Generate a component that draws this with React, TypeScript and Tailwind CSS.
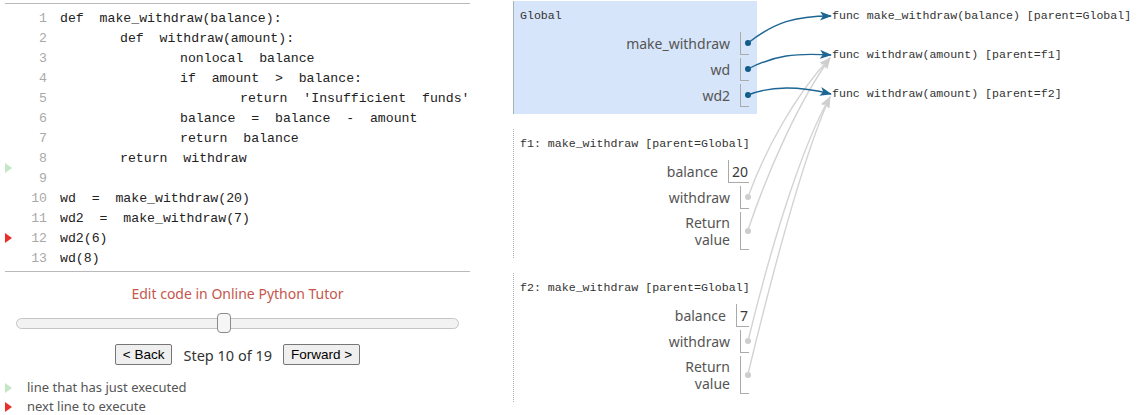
import React from "react";

const mono = "font-['Liberation_Mono','DejaVu_Sans_Mono',monospace]";
const sans = "font-['Noto_Sans','Liberation_Sans',sans-serif]";

const indents = ["pl-0", "pl-[60px]", "pl-[120px]", "pl-[180px]"];

const codeLines: { text: string; level: number }[] = [
  { text: "def  make_withdraw(balance):", level: 0 },
  { text: "def  withdraw(amount):", level: 1 },
  { text: "nonlocal  balance", level: 2 },
  { text: "if  amount  >  balance:", level: 2 },
  { text: "return  'Insufficient  funds'", level: 3 },
  { text: "balance  =  balance  -  amount", level: 2 },
  { text: "return  balance", level: 2 },
  { text: "return  withdraw", level: 1 },
  { text: "", level: 0 },
  { text: "wd  =  make_withdraw(20)", level: 0 },
  { text: "wd2  =  make_withdraw(7)", level: 0 },
  { text: "wd2(6)", level: 0 },
  { text: "wd(8)", level: 0 },
];

function GreenArrow() {
  return <span className="inline-block w-0 h-0 border-y-[5px] border-y-transparent border-l-[7px] border-l-[#c5e6c5]" />;
}

function RedArrow() {
  return <span className="inline-block w-0 h-0 border-y-[5px] border-y-transparent border-l-[7px] border-l-[#e8302a]" />;
}

function CodePanel() {
  return (
    <div className="ml-[5px] mt-[3px] w-[465px] border-y border-[#b9b9b9] pt-[5px] pb-[2px]">
      {codeLines.map((line, i) => (
        <div key={i} className={`relative flex h-[20px] items-center ${mono} text-[13.2px] whitespace-pre`}>
          {i === 7 && (
            <span className="absolute left-0 top-[14px] flex">
              <GreenArrow />
            </span>
          )}
          {i === 11 && (
            <span className="absolute left-0 top-[4px] flex">
              <RedArrow />
            </span>
          )}
          <span className="w-[42px] text-right text-[#aaa]">{i + 1}</span>
          <span className={`ml-[13px] text-[#222] ${indents[line.level]}`}>{line.text}</span>
        </div>
      ))}
    </div>
  );
}

function Controls() {
  return (
    <div className={sans}>
      <div className="mt-[13px] h-[18px] text-center text-[14px] leading-[18px] text-[#c4574d]">
        Edit code in Online Python Tutor
      </div>
      <div className="relative mx-[16px] mt-[10px] h-[20px]">
        <div className="absolute left-0 right-0 top-[5px] h-[11px] rounded-full border border-[#c5c5c5] bg-[#f2f2f2]" />
        <div className="absolute left-[201px] top-0 h-[20px] w-[14px] rounded-[4px] border border-[#8a8a8a] bg-[#f6f6f6]" />
      </div>
      <div className="mt-[11px] flex h-[21px] items-center justify-center gap-[11px]">
        <button className="h-[21px] rounded-[2px] border border-[#767676] bg-[#efefef] px-[7px] font-['Liberation_Sans',sans-serif] text-[13.5px] text-black">
          &lt; Back
        </button>
        <span className="text-[14.5px] leading-[20px] text-[#333]">Step 10 of 19</span>
        <button className="h-[21px] rounded-[2px] border border-[#767676] bg-[#efefef] px-[7px] font-['Liberation_Sans',sans-serif] text-[13.5px] text-black">
          Forward &gt;
        </button>
      </div>
      <div className="mt-[13px] text-[13px] text-[#555]">
        <div className="flex h-[19px] items-center">
          <span className="ml-[5px] flex w-[22px]">
            <GreenArrow />
          </span>
          line that has just executed
        </div>
        <div className="flex h-[19px] items-center">
          <span className="ml-[5px] flex w-[22px]">
            <RedArrow />
          </span>
          next line to execute
        </div>
      </div>
    </div>
  );
}

type Row = { name: string[]; value?: string; pointer?: "blue" | "gray"; tall?: boolean };

function Frame({ title, rows, highlighted }: { title: string; rows: Row[]; highlighted?: boolean }) {
  return (
    <div
      className={
        highlighted
          ? "w-[244px] border-l border-[#a6b3b6] bg-[#d6e5f9] pl-[6px] pr-[8px] pt-[7px] pb-[7px]"
          : "w-[244px] border-l border-dotted border-[#aaa] bg-white pl-[6px] pr-[8px] pt-[7px] pb-[8px]"
      }
    >
      <div className={`h-[16px] leading-[16px] ${mono} text-[11.6px] text-[#333] whitespace-nowrap`}>{title}</div>
      <div className="mt-[8px] flex flex-col items-end gap-[3px]">
        {rows.map((r) => (
          <div key={r.name.join(" ")} className="flex items-center">
            <div className={`pr-[10px] text-right ${sans} text-[14px] leading-[17px] text-[#555]`}>
              {r.name.map((n) => (
                <div key={n}>{n}</div>
              ))}
            </div>
            <div
              className={`flex items-center border-b border-l border-[#aaa] ${r.tall ? "h-[38px]" : "h-[23px]"} ${
                r.value ? "pl-[3px] pr-[1px]" : "w-[9px] justify-end"
              }`}
            >
              {r.value && <span className={`${sans} text-[14px] text-[#3a3a3a]`}>{r.value}</span>}
              {r.pointer === "blue" && <span className="mr-[-2px] h-[6px] w-[6px] rounded-full bg-[#0f5a88]" />}
              {r.pointer === "gray" && <span className="mr-[-2px] h-[6px] w-[6px] rounded-full bg-[#cdcdcd]" />}
            </div>
          </div>
        ))}
      </div>
    </div>
  );
}

function Arrows() {
  return (
    <svg className="pointer-events-none absolute left-0 top-0" width="1137" height="415">
      <defs>
        <marker id="headBlue" markerUnits="userSpaceOnUse" markerWidth="12" markerHeight="9" refX="11" refY="4.5" orient="auto">
          <path d="M0,0 L12,4.5 L0,9 L3,4.5 z" fill="#1d6593" />
        </marker>
        <marker id="headGray" markerUnits="userSpaceOnUse" markerWidth="12" markerHeight="9" refX="11" refY="4.5" orient="auto">
          <path d="M0,0 L12,4.5 L0,9 L3,4.5 z" fill="#cfcfcf" />
        </marker>
      </defs>
      <g fill="none" strokeWidth="1.4">
        <path d="M748,230 C770,165 800,100 830,58" stroke="#d3d3d3" markerEnd="url(#headGray)" />
        <path d="M748,197 C765,150 795,95 830,58" stroke="#d3d3d3" markerEnd="url(#headGray)" />
        <path d="M748,374 C778,250 808,145 830,97" stroke="#d3d3d3" markerEnd="url(#headGray)" />
        <path d="M748,341 C775,230 805,140 830,97" stroke="#d3d3d3" markerEnd="url(#headGray)" />
        <path d="M748,43 C775,22 795,16 831,16" stroke="#1d6593" markerEnd="url(#headBlue)" />
        <path d="M748,69 C775,55 795,53 831,55" stroke="#1d6593" markerEnd="url(#headBlue)" />
        <path d="M748,95 C765,88 790,84 831,94" stroke="#1d6593" markerEnd="url(#headBlue)" />
      </g>
    </svg>
  );
}

export default function App() {
  return (
    <div className="relative h-[415px] w-[1137px] overflow-hidden bg-white">
      <div className="flex">
        <div className="w-[475px]">
          <CodePanel />
          <Controls />
        </div>
        <div className="ml-[38px] flex pt-[1px]">
          <div className="flex flex-col gap-[15px]">
            <Frame
              title="Global"
              highlighted
              rows={[
                { name: ["make_withdraw"], pointer: "blue" },
                { name: ["wd"], pointer: "blue" },
                { name: ["wd2"], pointer: "blue" },
              ]}
            />
            <Frame
              title="f1: make_withdraw [parent=Global]"
              rows={[
                { name: ["balance"], value: "20" },
                { name: ["withdraw"], pointer: "gray" },
                { name: ["Return", "value"], pointer: "gray", tall: true },
              ]}
            />
            <Frame
              title="f2: make_withdraw [parent=Global]"
              rows={[
                { name: ["balance"], value: "7" },
                { name: ["withdraw"], pointer: "gray" },
                { name: ["Return", "value"], pointer: "gray", tall: true },
              ]}
            />
          </div>
          <div className={`ml-[75px] mt-[5px] flex flex-col gap-[19px] ${mono} text-[11.6px] text-[#333]`}>
            <div className="h-[20px] leading-[20px] whitespace-nowrap">func make_withdraw(balance) [parent=Global]</div>
            <div className="h-[20px] leading-[20px] whitespace-nowrap">func withdraw(amount) [parent=f1]</div>
            <div className="h-[20px] leading-[20px] whitespace-nowrap">func withdraw(amount) [parent=f2]</div>
          </div>
        </div>
      </div>
      <Arrows />
    </div>
  );
}
